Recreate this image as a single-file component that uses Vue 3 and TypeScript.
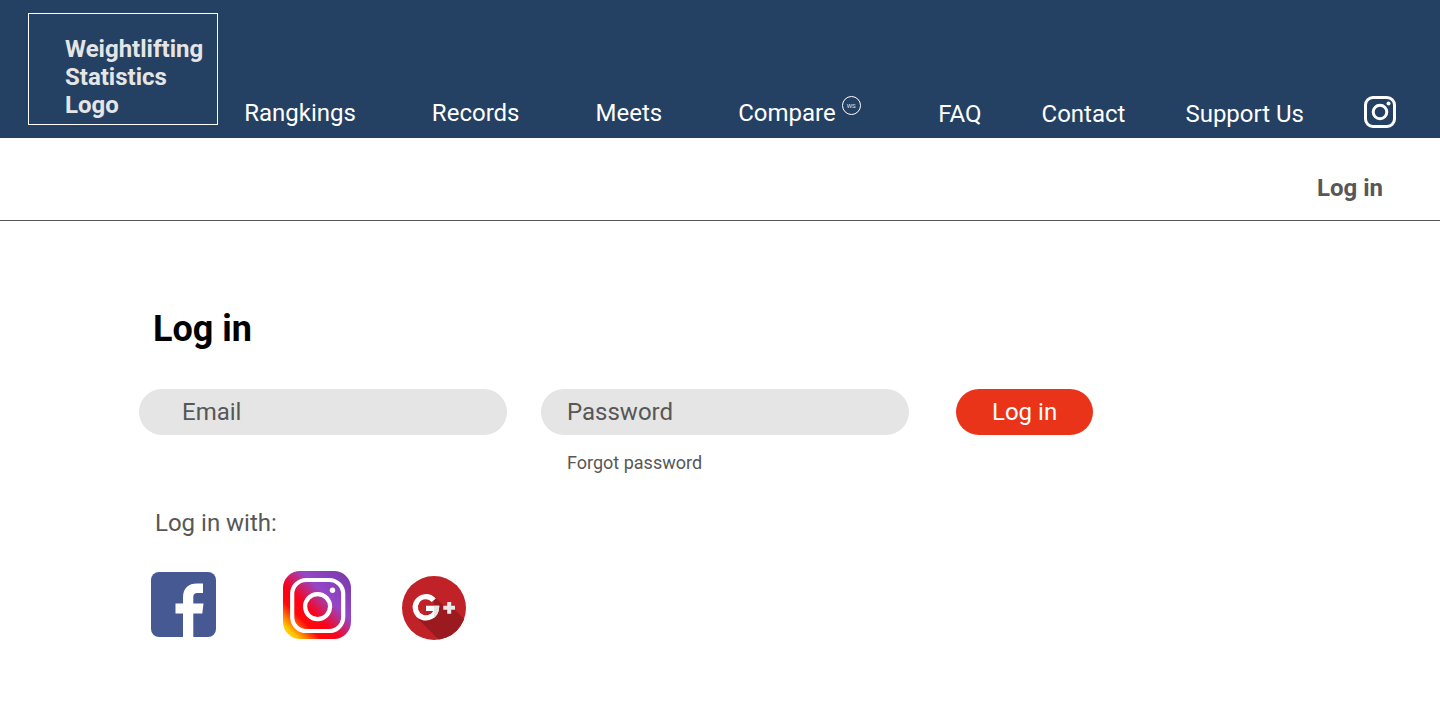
<script setup lang="ts">
import { ref } from 'vue'

interface NavItem {
  label: string
  badge?: string
}

const primaryNav: NavItem[] = [
  { label: 'Rangkings' },
  { label: 'Records' },
  { label: 'Meets' },
  { label: 'Compare', badge: 'WS' },
]
const secondaryNav: NavItem[] = [{ label: 'FAQ' }, { label: 'Contact' }, { label: 'Support Us' }]

const email = ref('')
const password = ref('')
</script>

<template>
  <div class="page">
    <header class="header">
      <a class="logo" href="#">Weightlifting<br />Statistics<br />Logo</a>
      <nav class="nav">
        <ul class="nav-list primary">
          <li v-for="item in primaryNav" :key="item.label">
            <a class="nav-link" href="#">{{ item.label }}<span v-if="item.badge" class="badge">{{ item.badge }}</span></a>
          </li>
        </ul>
        <ul class="nav-list secondary">
          <li v-for="item in secondaryNav" :key="item.label">
            <a class="nav-link" href="#">{{ item.label }}</a>
          </li>
          <li>
            <a class="icon-link" href="#" aria-label="Instagram">
              <svg width="32" height="32" viewBox="0 0 32 32" fill="none" stroke="#fff" stroke-width="3">
                <rect x="1.5" y="1.5" width="29" height="29" rx="7.5" />
                <circle cx="16" cy="16" r="6.8" />
                <circle cx="24.5" cy="7.5" r="2" fill="#fff" stroke="none" />
              </svg>
            </a>
          </li>
        </ul>
      </nav>
    </header>

    <div class="account-bar">
      <a class="account-link" href="#">Log in</a>
    </div>

    <main class="main">
      <h1 class="title">Log in</h1>
      <form class="form" @submit.prevent>
        <input v-model="email" class="field email" type="email" placeholder="Email" aria-label="Email" />
        <div class="password-group">
          <input v-model="password" class="field password" type="password" placeholder="Password" aria-label="Password" />
          <a class="forgot" href="#">Forgot password</a>
        </div>
        <button class="submit" type="submit">Log in</button>
      </form>

      <p class="with">Log in with:</p>
      <ul class="socials">
        <li class="facebook">
          <a class="icon-link" href="#" aria-label="Facebook">
            <svg width="65" height="69" viewBox="0 0 65 69">
              <rect y="1" width="65" height="65" rx="8" fill="#475993" />
              <path
                d="M32 66V42.5H24.500V32.5H32V26.5C32 17 37.5 12.5 46 12.5H52V22H47C43.2 22 42.3 23.7 42.3 26.5V32.5H52.5L51.3 42.5H42.3V66Z"
                fill="#fff"
              />
            </svg>
          </a>
        </li>
        <li>
          <a class="icon-link" href="#" aria-label="Instagram">
            <svg width="68" height="69" viewBox="0 0 68 69">
              <defs>
                <linearGradient id="ig" x1="0" y1="1" x2="1" y2="0">
                  <stop offset="0.04" stop-color="#fd0" />
                  <stop offset="0.11" stop-color="#ffc800" />
                  <stop offset="0.28" stop-color="#ff0a0a" />
                  <stop offset="0.41" stop-color="#fb0218" />
                  <stop offset="0.64" stop-color="#9447c9" />
                  <stop offset="1" stop-color="#7638a4" />
                </linearGradient>
              </defs>
              <rect width="68" height="68" rx="17" fill="url(#ig)" />
              <g fill="none" stroke="#fff" stroke-width="4.2">
                <rect x="9.2" y="9" width="51" height="51" rx="14" />
                <circle cx="34.6" cy="35.6" r="12.5" />
              </g>
              <circle cx="49.5" cy="19.3" r="2.7" fill="#fff" />
            </svg>
          </a>
        </li>
        <li>
          <a class="icon-link" href="#" aria-label="Google Plus">
            <svg width="64" height="69" viewBox="0 0 64 69">
              <defs>
                <clipPath id="disc"><circle cx="32" cy="37" r="32" /></clipPath>
                <clipPath id="shade"><rect x="32" y="20" width="32" height="34" /></clipPath>
              </defs>
              <circle cx="32" cy="37" r="32" fill="#c02227" />
              <path d="M32 25L43 36L53 39L75 61L50 82L16 48L32 40Z" fill="#9b1a1f" clip-path="url(#disc)" />
              <path d="M31.7 29.2A10.6 10.6 0 1 0 34.4 37.4H24" fill="none" stroke="#fff" stroke-width="5.2" />
              <path d="M31.7 29.2A10.6 10.6 0 1 0 34.4 37.4H24" fill="none" stroke="#e5e5e5" stroke-width="5.2" clip-path="url(#shade)" />
              <path d="M47.2 31V42.7M41.3 36.8H53" stroke="#e9e9e9" stroke-width="4" />
            </svg>
          </a>
        </li>
      </ul>
    </main>
  </div>
</template>

<style>
body {
  margin: 0;
  background: #fff;
}
</style>

<style scoped>
.page {
  font-family: Roboto, "Liberation Sans", sans-serif;
  font-size: 24px;
  line-height: 28px;
  color: #575757;
}

.page *,
.page {
  box-sizing: border-box;
}

a {
  color: inherit;
  text-decoration: none;
}

ul {
  list-style: none;
  margin: 0;
  padding: 0;
}

.header {
  display: flex;
  align-items: flex-start;
  gap: 26px;
  min-height: 138px;
  padding: 13px 44px 10px 28px;
  background: #244063;
  color: #fff;
}

.logo {
  padding: 21px 14px 5px 36px;
  border: 1px solid #fff;
  color: #e5e5e5;
  font-weight: 700;
}

.nav {
  flex: 1;
  align-self: flex-end;
  display: flex;
  justify-content: space-between;
  align-items: flex-end;
}

.nav-list {
  display: flex;
  align-items: flex-end;
}

.primary {
  gap: 76px;
  padding-bottom: 1px;
}

.secondary {
  gap: 60px;
}

.nav-link {
  position: relative;
  display: block;
  white-space: nowrap;
}

.badge {
  position: absolute;
  top: -3px;
  left: calc(100% + 6px);
  width: 19px;
  height: 19px;
  border: 1px solid #fff;
  border-radius: 50%;
  color: #e5e5e5;
  font-size: 6px;
  line-height: 17px;
  text-align: center;
}

.icon-link,
.icon-link svg {
  display: block;
}

.account-bar {
  display: flex;
  justify-content: flex-end;
  padding: 36px 57px 18px;
  border-bottom: 1px solid #575757;
}

.account-link {
  font-weight: 700;
}

.main {
  padding: 87px 139px 70px;
}

.title {
  margin: 0 0 39px;
  padding-left: 14px;
  color: #000;
  font-size: 36px;
  line-height: 42px;
  font-weight: 700;
}

.form {
  display: flex;
  align-items: flex-start;
}

.field {
  height: 46px;
  border: 0;
  border-radius: 23px;
  background: #e5e5e5;
  color: #575757;
  font: inherit;
}

.field::placeholder {
  color: #575757;
  opacity: 1;
}

.email {
  flex: 0 1 368px;
  min-width: 0;
  padding: 0 24px 0 43px;
}

.password-group {
  flex: 0 1 368px;
  min-width: 0;
  margin: 0 47px 0 34px;
}

.password {
  display: block;
  width: 100%;
  padding: 0 24px 0 26px;
}

.forgot {
  display: block;
  margin-top: 17px;
  padding-left: 26px;
  font-size: 18px;
  line-height: 21px;
}

.submit {
  height: 46px;
  padding: 0 36px;
  border: 0;
  border-radius: 23px;
  background: #ea3419;
  color: #fff;
  font: inherit;
  white-space: nowrap;
}

.with {
  margin: 36px 0 34px;
  padding-left: 16px;
}

.socials {
  display: flex;
  gap: 51px;
  padding-left: 12px;
}

.facebook {
  margin-right: 16px;
}
</style>
